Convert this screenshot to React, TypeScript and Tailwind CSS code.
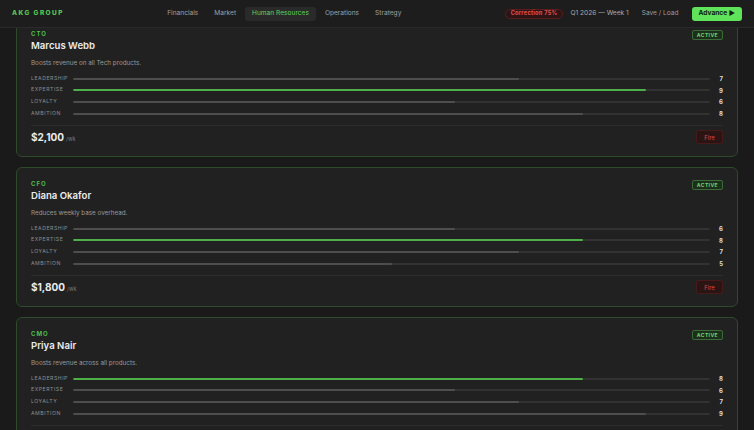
import React from "react";

type Stat = { label: string; value: number; green?: boolean };
type Exec = { role: string; name: string; desc: string; stats: Stat[]; salary: string };

const execs: Exec[] = [
  {
    role: "CTO",
    name: "Marcus Webb",
    desc: "Boosts revenue on all Tech products.",
    stats: [
      { label: "Leadership", value: 7 },
      { label: "Expertise", value: 9, green: true },
      { label: "Loyalty", value: 6 },
      { label: "Ambition", value: 8 },
    ],
    salary: "$2,100",
  },
  {
    role: "CFO",
    name: "Diana Okafor",
    desc: "Reduces weekly base overhead.",
    stats: [
      { label: "Leadership", value: 6 },
      { label: "Expertise", value: 8, green: true },
      { label: "Loyalty", value: 7 },
      { label: "Ambition", value: 5 },
    ],
    salary: "$1,800",
  },
  {
    role: "CMO",
    name: "Priya Nair",
    desc: "Boosts revenue across all products.",
    stats: [
      { label: "Leadership", value: 8, green: true },
      { label: "Expertise", value: 6 },
      { label: "Loyalty", value: 7 },
      { label: "Ambition", value: 9 },
    ],
    salary: "$2,400",
  },
];

const nav = ["Financials", "Market", "Human Resources", "Operations", "Strategy"];

function Card({ e }: { e: Exec }) {
  return (
    <div className="shrink-0 h-[140px] rounded-[6px] border border-[#2d4a2a] bg-[#212121] px-[14px] pt-[12px] flex flex-col">
      <div className="flex items-start justify-between">
        <div className="flex flex-col">
          <div className="text-[6px] leading-[8px] font-bold tracking-[0.16em] text-[#4fbf4b]">{e.role}</div>
          <div className="mt-[1px] text-[9.6px] leading-[14px] font-semibold text-[#ececec]">{e.name}</div>
        </div>
        <div className="h-[10px] px-[4px] rounded-[2px] border border-[#3b6b36] bg-[#1d2e1c] text-[5px] leading-[8px] font-bold tracking-[0.08em] text-[#6ed86a] flex items-center">
          ACTIVE
        </div>
      </div>
      <div className="mt-[5px] text-[6.3px] leading-[10px] text-[#9a9a9a]">{e.desc}</div>
      <div className="mt-[5px] flex flex-col">
        {e.stats.map((s) => (
          <div key={s.label} className="h-[11.6px] flex items-center">
            <div className="w-[42px] shrink-0 text-[5.2px] tracking-[0.1em] uppercase text-[#8e8e8e]">{s.label}</div>
            <div className="flex-1 h-[2px] rounded-full bg-[#323232] overflow-hidden">
              <div
                className={s.green ? "h-full rounded-full bg-[#4caf47]" : "h-full rounded-full bg-[#4e4e4e]"}
                style={{ width: `${s.value * 10}%` }}
              />
            </div>
            <div className="w-[13px] shrink-0 text-right text-[6px] font-bold text-[#dcdcdc]">{s.value}</div>
          </div>
        ))}
      </div>
      <div className="mt-[6px] border-t border-[#2c2c2c] pt-[4px] flex items-center justify-between">
        <div className="flex items-baseline gap-[2px]">
          <span className="text-[10px] leading-[14px] font-bold text-[#ececec]">{e.salary}</span>
          <span className="text-[5.5px] text-[#7a7a7a]">/wk</span>
        </div>
        <div className="h-[14px] w-[27px] rounded-[3px] border border-[#4a1a1a] bg-[#2a1414] text-[6px] text-[#d94a4a] flex items-center justify-center">
          Fire
        </div>
      </div>
    </div>
  );
}

export default function App() {
  return (
    <div
      className="w-[754px] h-[430px] overflow-hidden bg-[#1a1a1a] flex flex-col"
      style={{ fontFamily: "Inter, 'Liberation Sans', sans-serif" }}
    >
      <header className="relative z-10 h-[28px] shrink-0 bg-[#1d1d1d] border-b border-[#2a2a2a] px-[12px] flex items-center justify-between">
        <div className="text-[6.5px] font-extrabold tracking-[0.22em] text-[#56c952]">AKG GROUP</div>
        <nav className="flex items-center gap-[2px]">
          {nav.map((n) => (
            <div
              key={n}
              className={
                n === "Human Resources"
                  ? "h-[14px] px-[7px] rounded-[3px] bg-[#2a2a2a] text-[6.6px] text-[#5fd35b] flex items-center"
                  : "h-[14px] px-[7px] rounded-[3px] text-[6.6px] text-[#a0a0a0] flex items-center"
              }
            >
              {n}
            </div>
          ))}
        </nav>
        <div className="flex items-center">
          <div className="h-[10px] px-[5px] rounded-full border border-[#5a1c1c] bg-[#2e1414] text-[5.6px] font-bold tracking-[0.05em] text-[#e45252] flex items-center">
            Correction 75%
          </div>
          <div className="ml-[7px] text-[6.6px] text-[#aaaaaa]">Q1 2026 — Week 1</div>
          <div className="ml-[13px] text-[6.6px] text-[#9c9c9c]">Save / Load</div>
          <div className="ml-[13px] h-[14px] px-[7px] rounded-[3px] bg-[#5fe35a] text-[6.6px] font-bold text-[#102010] flex items-center">
            Advance ▶
          </div>
        </div>
      </header>
      <main className="flex-1 overflow-hidden px-[16px]">
        <div className="-mt-[11px] flex flex-col gap-[10px]">
          {execs.map((e) => (
            <Card key={e.role} e={e} />
          ))}
        </div>
      </main>
    </div>
  );
}
